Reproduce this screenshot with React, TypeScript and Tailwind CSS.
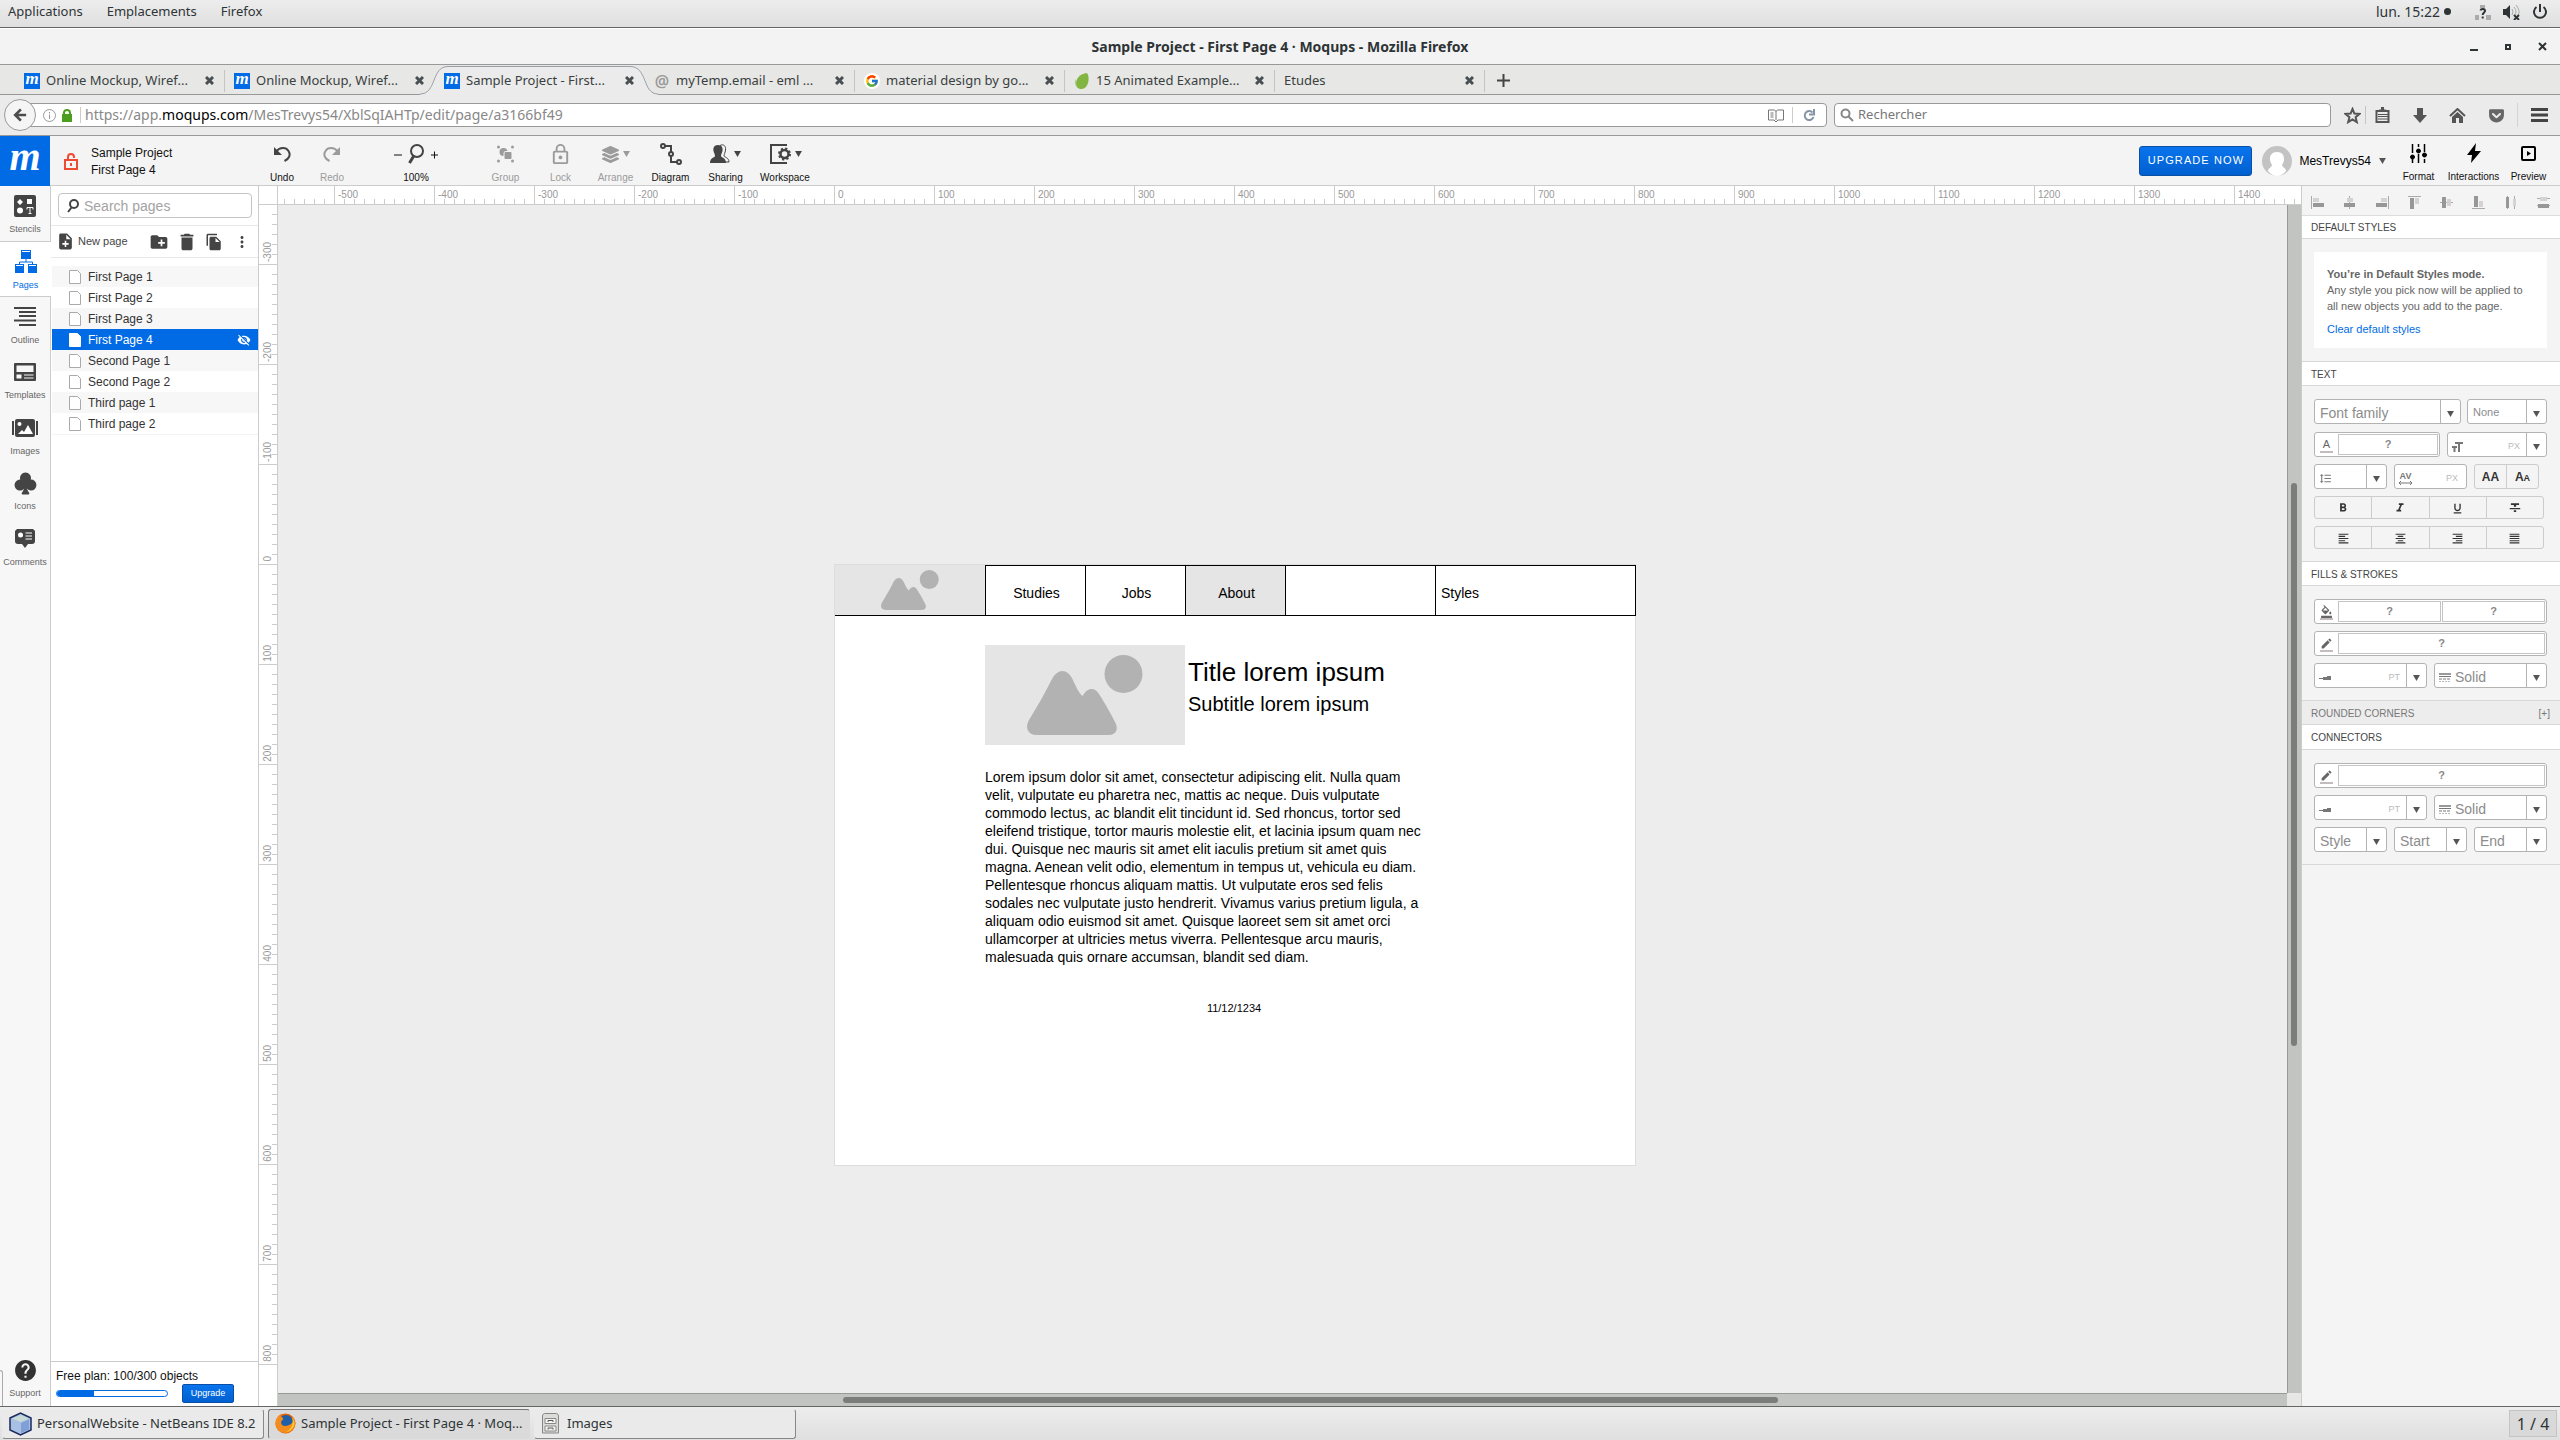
import type { ReactNode } from "react";
import {
  MdCreateNewFolder,
  MdDelete,
  MdEdit,
  MdFileCopy,
  MdFormatAlignCenter,
  MdFormatAlignJustify,
  MdFormatAlignLeft,
  MdFormatAlignRight,
  MdFormatBold,
  MdFormatColorFill,
  MdFormatItalic,
  MdFormatLineSpacing,
  MdFormatStrikethrough,
  MdFormatUnderlined,
  MdHelp,
  MdLockOutline,
  MdMoreVert,
  MdNoteAdd,
  MdVisibilityOff,
} from "react-icons/md";
import { FaGetPocket, FaLayerGroup } from "react-icons/fa";
import { FcGoogle } from "react-icons/fc";
import { BsSuitClubFill } from "react-icons/bs";

const UI = "font-['Noto_Sans',sans-serif]";
const APP = "font-['Liberation_Sans',Arial,sans-serif]";

function Caret({ className = "" }: { className?: string }) {
  return (
    <svg className={className} width="8" height="7" viewBox="0 0 8 7" aria-hidden="true">
      <path d="M0 0h8L4 7z" fill="currentColor" />
    </svg>
  );
}

/* ---------- desktop bar ---------- */

function DesktopBar() {
  return (
    <header
      className={`flex h-7 shrink-0 items-center border-b border-[#666] bg-linear-to-b from-[#ededed] to-[#dfdfdf] px-2 pb-1 text-[13px] text-[#2e3436] ${UI}`}
    >
      <nav className="flex gap-6">
        <button>Applications</button>
        <button>Emplacements</button>
        <button>Firefox</button>
      </nav>
      <div className="ml-auto flex items-center pr-1">
        <button className="flex items-center gap-1 text-sm">
          lun. 15:22
          <span className="size-[7px] rounded-full bg-[#2e3436]" />
        </button>
        <button aria-label="Network" className="ml-6">
          <svg width="16" height="16" viewBox="0 0 16 16">
            <path d="M5 1h5v3H5zM0 11h4v5H0zM11 11h5v5h-5z" fill="#a9abac" />
            <path d="M5.5 6.5C6 4.500 10 4.500 10 7c0 1.500-2.300 1.500-2.300 4M7.700 12.500v2" stroke="#2e3436" strokeWidth="2" fill="none" />
          </svg>
        </button>
        <button aria-label="Sound muted" className="ml-3">
          <svg width="17" height="16" viewBox="0 0 17 16">
            <path d="M0 5h3l4-4v14l-4-4H0z" fill="#2e3436" />
            <path d="M9 5q2 3 0 6M11 3q4 5 0 9M13 1q5 6 2 10" stroke="#a9abac" fill="none" />
            <path d="M11 11l5 5M16 11l-5 5" stroke="#2e3436" strokeWidth="2" />
          </svg>
        </button>
        <button aria-label="Power" className="ml-3">
          <svg width="16" height="16" viewBox="0 0 16 16" fill="none" stroke="#2e3436" strokeWidth="2">
            <path d="M8 0v8M4.500 3a6 6 0 1 0 7 0" />
          </svg>
        </button>
      </div>
    </header>
  );
}

function TitleBar() {
  return (
    <div
      className={`flex h-[37px] shrink-0 items-center border-t border-b border-t-white border-b-[#999] bg-[#f3f3f3] text-[#2e3436] ${UI}`}
    >
      <div className="w-[100px]" />
      <h1 className="flex-1 text-center text-sm font-bold">Sample Project - First Page 4 · Moqups - Mozilla Firefox</h1>
      <div className="flex w-[100px] items-center justify-end gap-[26px] pr-[13px]">
        <button aria-label="Minimise">
          <svg width="8" height="8" viewBox="0 0 8 8"><path d="M0 7h8" stroke="#2e3436" strokeWidth="2" /></svg>
        </button>
        <button aria-label="Maximise">
          <svg width="8" height="8" viewBox="0 0 8 8"><path d="M2 2h4v4H2z" stroke="#2e3436" strokeWidth="2" fill="none" /></svg>
        </button>
        <button aria-label="Close window">
          <svg width="9" height="9" viewBox="0 0 9 9"><path d="M1 1l7 7M8 1L1 8" stroke="#2e3436" strokeWidth="2" /></svg>
        </button>
      </div>
    </div>
  );
}

/* ---------- browser chrome ---------- */

function MFavicon() {
  return (
    <span className="flex size-4 shrink-0 items-center justify-center bg-[#006be5] pb-1 font-['Liberation_Serif',serif] text-[17px] leading-4 font-bold text-white italic">
      m
    </span>
  );
}

const tabs: { title: string; icon: ReactNode; active?: boolean }[] = [
  { title: "Online Mockup, Wiref...", icon: <MFavicon /> },
  { title: "Online Mockup, Wiref...", icon: <MFavicon /> },
  { title: "Sample Project - First...", icon: <MFavicon />, active: true },
  { title: "myTemp.email - eml ...", icon: <span className="w-4 text-center text-base leading-4 font-semibold text-[#999]">@</span> },
  {
    title: "material design by go...",
    icon: (
      <span className="flex size-4 items-center justify-center rounded-full bg-white">
        <FcGoogle size={14} />
      </span>
    ),
  },
  {
    title: "15 Animated Example...",
    icon: (
      <svg width="16" height="16" viewBox="0 0 16 16">
        <path d="M13 0C6 1 2 5 2 11c0 3 2 5 6 5 7-1 8-12 5-16z" fill="#82b541" />
        <path d="M2 6C0 9 1 13 4 15 2 12 2 9 2 6z" fill="#a9cc7c" />
      </svg>
    ),
  },
  { title: "Etudes", icon: null },
];

function TabBar() {
  return (
    <div className={`flex h-[30px] shrink-0 border-b border-[#999] bg-[#e7e7e5] pl-[15px] text-[13px] text-[#3a3f41] ${UI}`}>
      {tabs.map((tab, i) => (
        <div key={i} className="relative flex w-[210px] items-center gap-[6px] pt-[2px] pr-[11px] pl-[9px]">
          {tab.active ? (
            <svg className="absolute top-0 -left-[15px] h-[30px] w-[240px]" viewBox="0 0 240 30" fill="none" aria-hidden="true">
              <path d="M0 30V29C17 29 11 1.500 28 1.500H210C228 1.500 222 29 238 29V30z" fill="#ebebeb" />
              <path d="M0 29C17 29 11 1.500 28 1.500H210C228 1.500 222 29 238 29" stroke="#9aa0a8" />
            </svg>
          ) : (
            i !== 1 && <span className="absolute top-[5px] right-0 h-[22px] w-px bg-[#c4c4c4]" />
          )}
          {tab.icon && <span className="relative flex shrink-0">{tab.icon}</span>}
          <span className="relative flex-1 whitespace-nowrap">{tab.title}</span>
          <button aria-label="Close tab" className="relative">
            <svg width="9" height="9" viewBox="0 0 9 9"><path d="M1 1l7 7M8 1L1 8" stroke="#4a4f52" strokeWidth="3" /></svg>
          </button>
        </div>
      ))}
      <button aria-label="New tab" className="ml-3 pt-[2px]">
        <svg width="13" height="13" viewBox="0 0 13 13"><path d="M6.500 0v13M0 6.500h13" stroke="#444" strokeWidth="2" /></svg>
      </button>
    </div>
  );
}

function NavBar() {
  return (
    <div className={`flex h-[41px] shrink-0 items-center border-b border-[#999] bg-[#ebebeb] pr-3 pl-1 text-[13px] ${UI}`}>
      <button
        aria-label="Back"
        className="z-10 flex size-8 shrink-0 items-center justify-center rounded-full border border-[#999] bg-[#f5f5f5]"
      >
        <svg width="14" height="14" viewBox="0 0 16 16" fill="none" stroke="#4c4c4c" strokeWidth="3">
          <path d="M15 8H3M9 1.500L2.500 8 9 14.500" />
        </svg>
      </button>
      <div className="-ml-3 flex h-6 flex-1 items-center rounded-sm border border-[#999] bg-white pl-[18px]">
        <svg width="13" height="13" viewBox="0 0 13 13" fill="none" stroke="#999">
          <circle cx="6.500" cy="6.500" r="6" />
          <path d="M6.500 5.500V10M6.500 3v1.500" />
        </svg>
        <svg className="ml-[6px]" width="10" height="13" viewBox="0 0 10 13">
          <path d="M0 5h10v8H0z" fill="#4c9e1f" />
          <path d="M2 6V4a3 3 0 0 1 6 0v2" stroke="#4c9e1f" strokeWidth="2" fill="none" />
        </svg>
        <span className="ml-2 h-4 w-px bg-[#ccc]" />
        <a href="#page" className="ml-1 flex-1 text-sm leading-5 text-[#888]">
          https://app.<span className="text-black">moqups.com</span>/MesTrevys54/XblSqIAHTp/edit/page/a3166bf49
        </a>
        <button aria-label="Reader view">
          <svg width="16" height="13" viewBox="0 0 16 13" fill="none" stroke="#777">
            <path d="M.5 1h6L8 2.500 9.500 1h6v10H10l-2 2-2-2H.5zM8 2v9M2.500 4h3M2.500 6h3M2.500 8h3" />
          </svg>
        </button>
        <span className="ml-2 h-4 w-px bg-[#ccc]" />
        <button aria-label="Reload" className="mr-[11px] ml-[10px]">
          <svg width="12" height="13" viewBox="0 0 12 13" fill="none" stroke="#8494a4" strokeWidth="2">
            <path d="M9.500 3.500A4.500 4.500 0 1 0 10.500 8M11 0v5.500H6" />
          </svg>
        </button>
      </div>
      <label className="ml-[7px] flex h-6 w-[497px] items-center rounded-sm border border-[#999] bg-white pl-[5px]">
        <svg width="14" height="14" viewBox="0 0 14 14" fill="none" stroke="#888" strokeWidth="2">
          <circle cx="5.500" cy="5.500" r="4" />
          <path d="M8.500 8.500L13 13" />
        </svg>
        <input aria-label="Rechercher" placeholder="Rechercher" className="ml-1 flex-1 outline-none placeholder:text-[#777]" />
      </label>
      <button aria-label="Bookmark" className="ml-[13px]">
        <svg width="17" height="17" viewBox="0 0 17 17" fill="none" stroke="#555" strokeWidth="2">
          <path d="M8.500 2l1.900 4.600 5 .4-3.800 3.200 1.200 4.900-4.300-2.700-4.300 2.700 1.200-4.900L1.600 7l5-.4z" />
        </svg>
      </button>
      <span className="ml-1 h-[18px] w-px bg-[#c4c4c4]" />
      <button aria-label="Library" className="ml-[9px]">
        <svg width="15" height="16" viewBox="0 0 15 16">
          <path d="M1.500 4h12v11h-12z" fill="none" stroke="#555" strokeWidth="2" />
          <path d="M4 2.500h2V0h3v2.500h2V5H4z" fill="#555" />
          <path d="M3 7.500h10M3 9.500h10M3 12h10" stroke="#555" />
        </svg>
      </button>
      <button aria-label="Downloads" className="ml-[23px]">
        <svg width="14" height="15" viewBox="0 0 14 15"><path d="M4 0h6v7h4l-7 8-7-8h4z" fill="#555" /></svg>
      </button>
      <button aria-label="Home" className="ml-[22px]">
        <svg width="17" height="15" viewBox="0 0 17 15">
          <path d="M1 8l7.500-7L16 8" fill="none" stroke="#555" strokeWidth="2" />
          <path d="M3 9l5.500-5L14 9v6h-4v-5H7v5H3z" fill="#555" />
        </svg>
      </button>
      <button aria-label="Pocket" className="ml-[22px] text-[#666]">
        <FaGetPocket size={17} />
      </button>
      <span className="ml-[12px] h-6 w-px bg-[#d4d4d4]" />
      <button aria-label="Menu" className="ml-[13px]">
        <svg width="17" height="14" viewBox="0 0 17 14"><path d="M0 1.500h17M0 7h17M0 12.500h17" stroke="#444" strokeWidth="3" /></svg>
      </button>
    </div>
  );
}

/* ---------- app header ---------- */

function ToolButton({
  label,
  icon,
  caret,
  disabled,
  className = "w-[55px]",
}: {
  label: string;
  icon: ReactNode;
  caret?: boolean;
  disabled?: boolean;
  className?: string;
}) {
  return (
    <button className={`flex flex-col items-center text-[10px] ${disabled ? "text-[#9b9b9b]" : "text-[#111]"} ${className}`}>
      <span className={`flex h-6 items-center gap-1 ${disabled ? "" : "text-[#444]"}`}>
        {icon}
        {caret && <Caret className="h-[6px] w-[7px]" />}
      </span>
      <span className="mt-1 leading-4">{label}</span>
    </button>
  );
}

const undoIcon = (
  <svg width="18" height="20" viewBox="0 0 18 20">
    <path d="M3 7.500C7 3 13 3 15.500 7S16 15 11.500 17" fill="none" stroke="currentColor" strokeWidth="2" />
    <path d="M1 3v8h8z" fill="currentColor" />
  </svg>
);
const groupIcon = (
  <svg width="17" height="18" viewBox="0 0 17 18" fill="currentColor">
    <circle cx="1.500" cy="2" r="1.500" />
    <circle cx="15.500" cy="2" r="1.500" />
    <circle cx="1.500" cy="16" r="1.500" />
    <circle cx="15.500" cy="16" r="1.500" />
    <path d="M6.500 3a4 4 0 0 1 4 3H9Q6.500 6 6.500 9v2A4 4 0 0 1 6.500 3z" />
    <rect x="7.500" y="7" width="7" height="7" rx="1" />
  </svg>
);
const diagramIcon = (
  <svg width="22" height="22" viewBox="0 0 22 22" fill="none" stroke="currentColor" strokeWidth="2">
    <circle cx="3" cy="3" r="2" />
    <circle cx="11" cy="11" r="2" />
    <circle cx="19" cy="19" r="2" />
    <path d="M5 3h6v6M11 13v6h6" />
  </svg>
);
const sharingIcon = (
  <svg width="20" height="20" viewBox="0 0 20 20">
    <path d="M10 1.500c4-2 6 1 5.500 4.500-.3 3-1.500 4-1.500 6 0 1 5 1.500 5 6h-4" fill="none" stroke="currentColor" />
    <path d="M8 1c4 0 5 3 4.500 6-.3 2-1.500 3-1.500 5 0 1.500 5 1.500 5 7H0c0-5.500 5-5.500 5-7 0-2-1.200-3-1.500-5C3 4 4 1 8 1z" fill="currentColor" />
  </svg>
);
const workspaceIcon = (
  <svg width="22" height="22" viewBox="0 0 22 22" fill="none" stroke="currentColor">
    <path d="M17 3V2H2v18h15v-1" strokeWidth="2" />
    <circle cx="15.500" cy="11" r="4" strokeWidth="2.500" />
    <circle cx="15.500" cy="11" r="5.500" strokeWidth="2" strokeDasharray="2.160 2.160" />
  </svg>
);

function AppHeader() {
  return (
    <div className={`flex h-[50px] shrink-0 border-b border-[#ccc] bg-[#f4f4f4] ${APP}`}>
      <a
        href="#home"
        aria-label="Moqups"
        className="-mb-px flex w-[50px] items-center justify-center bg-[#006be5] pb-2 font-['Liberation_Serif',serif] text-[40px] leading-none font-bold text-white italic"
      >
        m
      </a>
      <div className="flex w-[206px] items-center pt-[2px] pl-[14px] text-xs leading-[17px] text-[#111]">
        <svg width="14" height="19" viewBox="0 0 14 19" fill="none" stroke="#ef4a34" strokeWidth="2">
          <rect x="1" y="8" width="12" height="9" />
          <path d="M4 8V5a3 3 0 0 1 6 0v1" />
          <path d="M6 12.500h2" strokeWidth="3" />
        </svg>
        <div className="ml-[13px]">
          <p>Sample Project</p>
          <p>First Page 4</p>
        </div>
      </div>
      <div className="flex flex-1 items-start pt-[6px] pl-px">
        <ToolButton label="Undo" icon={undoIcon} className="w-[50px]" />
        <ToolButton label="Redo" icon={<span className="-scale-x-100">{undoIcon}</span>} disabled className="w-[50px]" />
        <ToolButton
          label="100%"
          className="mr-8 ml-[29px] w-[60px]"
          icon={
            <svg width="44" height="20" viewBox="0 0 44 20" fill="none" stroke="currentColor">
              <path d="M0 11h8M37 11h8M40.500 7.500v7" stroke="#111" />
              <circle cx="23" cy="7" r="6" strokeWidth="2" />
              <path d="M20 11.500L15.500 19" strokeWidth="3" />
            </svg>
          }
        />
        <ToolButton label="Group" icon={groupIcon} disabled />
        <ToolButton label="Lock" icon={<MdLockOutline size={23} />} disabled />
        <ToolButton label="Arrange" icon={<FaLayerGroup size={17} />} caret disabled />
        <ToolButton label="Diagram" icon={diagramIcon} />
        <ToolButton label="Sharing" icon={sharingIcon} caret />
        <ToolButton label="Workspace" icon={workspaceIcon} caret className="w-16" />
      </div>
      <div className="flex items-center">
        <button className="h-[30px] w-[113px] rounded-[3px] border border-[#0a4fa3] bg-linear-to-b from-[#0a74ee] to-[#0060d0] text-[11px] tracking-widest text-white">
          UPGRADE NOW
        </button>
        <button className="ml-[10px] flex items-center text-xs text-black">
          <svg width="30" height="30" viewBox="0 0 30 30">
            <circle cx="15" cy="15" r="15" fill="#c3c3c3" />
            <path d="M15 6c5 0 7 3 7 7 0 3-1 4-2 6 0 2 4 3 4 6q-4 5-9 5t-9-5c0-3 4-4 4-6-1-2-2-3-2-6 0-4 2-7 7-7z" fill="#fff" />
          </svg>
          <span className="ml-[7px]">MesTrevys54</span>
          <Caret className="ml-2 h-[6px] w-[7px] text-[#555]" />
        </button>
      </div>
      <div className="flex items-start pt-[5px] pr-1 pl-[5px]">
        <ToolButton
          label="Format"
          icon={
            <svg width="17" height="19" viewBox="0 0 17 19" fill="#000" stroke="#000">
              <path d="M2.500 0v9M2.500 15v4M8.500 0v3M8.500 10v9M14.500 0v8M14.500 15v4" strokeWidth="1.500" />
              <circle cx="2.500" cy="13" r="2" />
              <circle cx="8.500" cy="7" r="2" />
              <circle cx="14.500" cy="11" r="2" />
            </svg>
          }
        />
        <ToolButton label="Interactions" icon={<svg width="14" height="20" viewBox="0 0 14 20"><path d="M9 0L0 12h5l-1 8L14 8H8z" fill="#000" /></svg>} />
        <ToolButton
          label="Preview"
          icon={
            <svg width="15" height="15" viewBox="0 0 15 15" fill="none" stroke="#000">
              <rect x="1" y="1" width="13" height="13" rx="1" strokeWidth="2" />
              <path d="M6 5v5l4-2.500z" fill="#000" stroke="none" />
            </svg>
          }
        />
      </div>
    </div>
  );
}

/* ---------- left rail ---------- */

const railItems: { label: string; icon: ReactNode }[] = [
  {
    label: "Stencils",
    icon: (
      <svg width="22" height="22" viewBox="0 0 22 22">
        <rect width="22" height="22" rx="2" fill="currentColor" />
        <path d="M6 4l3 3-3 3-3-3zM13 4h5v5h-5z" fill="#fff" />
        <circle cx="6" cy="15.500" r="3" fill="#fff" />
        <path d="M13 14.500v-2h6v2M16 12.500V18M14.500 18.500h3" fill="none" stroke="#fff" />
      </svg>
    ),
  },
  {
    label: "Pages",
    icon: (
      <svg width="22" height="24" viewBox="0 0 22 24" fill="currentColor">
        <path d="M6 0h10v9H6zM0 14h9v9H0zM13 14h9v9h-9z" />
        <path d="M7 1.500h8M1 15.500h7M14 15.500h7" stroke="#fff" />
        <path d="M4.500 14v-2h13v2M11 9v3" fill="none" stroke="currentColor" />
      </svg>
    ),
  },
  {
    label: "Outline",
    icon: (
      <svg width="22" height="19" viewBox="0 0 22 19" stroke="currentColor" strokeWidth="2">
        <path d="M0 1h22M5 5h17M5 9h17M0 13.500h22M5 18h17" />
      </svg>
    ),
  },
  {
    label: "Templates",
    icon: (
      <svg width="22" height="18" viewBox="0 0 22 18">
        <rect width="22" height="18" rx="1" fill="currentColor" />
        <path d="M2.500 2.500h17V9h-17zM2.500 11.500h5v4h-5z" fill="#f7f7f7" />
        <path d="M10 12h9.500M10 15h9.500" stroke="#f7f7f7" />
      </svg>
    ),
  },
  {
    label: "Images",
    icon: (
      <svg width="26" height="18" viewBox="0 0 26 18">
        <rect x="3" width="20" height="18" rx="2" fill="currentColor" />
        <path d="M1 2v14M25 2v14" stroke="currentColor" strokeWidth="2" />
        <circle cx="7.500" cy="5" r="2" fill="#fff" />
        <path d="M6 15l4-4 2 2 4-7 5 9z" fill="#fff" />
      </svg>
    ),
  },
  { label: "Icons", icon: <BsSuitClubFill size={25} /> },
  {
    label: "Comments",
    icon: (
      <svg width="20" height="19" viewBox="0 0 20 19">
        <path d="M2 0h16l2 2v10q0 3-3 3h-4l-3 4-3-4H3q-3 0-3-3V2z" fill="currentColor" />
        <circle cx="5.500" cy="6" r="2.500" fill="#fff" />
        <path d="M10.500 4H17M10.500 7H17M10.500 10H17" stroke="#fff" />
      </svg>
    ),
  },
];

function Rail() {
  return (
    <nav className="relative flex w-[51px] shrink-0 flex-col bg-[#f7f7f7] text-[9px] text-[#666]">
      <div className="grid h-[388px] grid-rows-7">
        {railItems.map((item) => {
          const active = item.label === "Pages";
          return (
            <button
              key={item.label}
              className={`flex flex-col items-center ${
                active ? "border-y border-[#ccc] bg-white text-[#006be5]" : "border-r border-[#ccc]"
              }`}
            >
              <span className={`mt-[7px] flex h-[26px] items-center ${active ? "" : "text-[#444]"}`}>{item.icon}</span>
              <span className="mt-1 leading-3">{item.label}</span>
            </button>
          );
        })}
      </div>
      <div className="flex flex-1 flex-col items-center justify-end border-r border-[#ccc] pb-[7px]">
        <button className="flex flex-col items-center">
          <MdHelp size={25} className="text-[#333]" />
          <span className="mt-1 leading-3">Support</span>
        </button>
      </div>
      <span className="absolute bottom-0 left-0 h-9 w-[3px] rounded-tr-sm border-t border-r border-[#aaa]" />
    </nav>
  );
}

/* ---------- pages panel ---------- */

const pages = [
  "First Page 1",
  "First Page 2",
  "First Page 3",
  "First Page 4",
  "Second Page 1",
  "Second Page 2",
  "Third page 1",
  "Third page 2",
];

function PageIcon({ filled }: { filled: boolean }) {
  return (
    <svg width="12" height="14" viewBox="0 0 12 14">
      <path d="M.5.5h8l3 3v10H.5z" fill="#fff" stroke={filled ? "#fff" : "#aaa"} />
    </svg>
  );
}

function PagesPanel() {
  return (
    <aside className="flex w-[208px] shrink-0 flex-col border-r border-[#ccc] bg-white text-[#333]">
      <div className="border-b border-[#e8e8e8] p-[7px] pr-[6px]">
        <label className="flex h-[25px] items-center rounded-sm border border-[#c4c4c4] pl-2">
          <svg width="12" height="14" viewBox="0 0 12 14" fill="none" stroke="#444">
            <circle cx="7" cy="5" r="4" strokeWidth="2" />
            <path d="M4.500 8.500L1 13" strokeWidth="2" />
          </svg>
          <input aria-label="Search pages" placeholder="Search pages" className="ml-[5px] w-[150px] text-sm outline-none placeholder:text-[#a3a3a3]" />
        </label>
      </div>
      <div className="flex h-8 items-center border-b border-[#e8e8e8] pl-[5px] text-[#444]">
        <button className="flex items-center gap-[3px] text-[11px]">
          <MdNoteAdd size={19} />
          New page
        </button>
        <button aria-label="New folder" className="ml-[21px]"><MdCreateNewFolder size={20} /></button>
        <button aria-label="Delete page" className="ml-[7px]"><MdDelete size={22} /></button>
        <button aria-label="Duplicate page" className="ml-[7px]"><MdFileCopy size={18} /></button>
        <button aria-label="More" className="ml-[10px]"><MdMoreVert size={18} /></button>
      </div>
      <ul className="mt-2 ml-px flex-1 text-xs">
        {pages.map((page, i) => {
          const selected = i === 3;
          return (
            <li
              key={page}
              className={`flex h-[21px] items-center pt-px pr-[7px] pl-[17px] ${
                selected ? "bg-[#006be5] text-white" : i % 2 === 0 ? "bg-[#f7f7f7]" : "bg-white"
              }`}
            >
              <button className="flex flex-1 items-center gap-[7px]">
                <PageIcon filled={selected} />
                {page}
              </button>
              {selected && <MdVisibilityOff size={14} />}
            </li>
          );
        })}
        <li className="h-px bg-[#f4f4f4]" />
      </ul>
      <div className="h-[45px] border-t border-[#ccc] pt-[6px] pl-[5px]">
        <p className="text-xs leading-4 text-[#111]">Free plan: 100/300 objects</p>
        <div className="flex items-center">
          <div className="h-[7px] w-[112px] overflow-hidden rounded-full border border-[#006be5]">
            <div className="h-full w-1/3 bg-[#006be5]" />
          </div>
          <button className="ml-[14px] h-[19px] w-[52px] rounded-xs border border-[#0a4fa3] bg-linear-to-b from-[#0a74ee] to-[#0060d0] text-[9px] text-white">
            Upgrade
          </button>
        </div>
      </div>
    </aside>
  );
}

/* ---------- rulers and canvas ---------- */

const hMarks = Array.from({ length: 20 }, (_, i) => -500 + i * 100);
const vMarks = Array.from({ length: 12 }, (_, i) => -300 + i * 100);

function HRuler() {
  return (
    <div className="flex h-[19px] flex-1 overflow-hidden border-b border-[#ccc] bg-white text-[10px] text-[#999]">
      <div className="w-[56px] shrink-0 bg-[repeating-linear-gradient(to_left,transparent_0_9px,#ccc_9px_10px)] bg-[length:100%_5px] bg-bottom bg-no-repeat" />
      {hMarks.map((n) => (
        <div
          key={n}
          className="h-full w-[100px] shrink-0 border-l border-[#ccc] bg-[repeating-linear-gradient(to_right,transparent_0_9px,#ccc_9px_10px)] bg-[length:100%_5px] bg-bottom bg-no-repeat pl-[3px] leading-[18px]"
        >
          {n}
        </div>
      ))}
    </div>
  );
}

function VRuler() {
  return (
    <div className="flex h-full w-[19px] shrink-0 flex-col overflow-hidden border-r border-[#ccc] bg-white text-[10px] text-[#999]">
      {vMarks.map((n, i) => (
        <div
          key={n}
          className={`flex w-full shrink-0 flex-col items-start justify-end border-b border-[#ccc] bg-[repeating-linear-gradient(to_top,transparent_0_9px,#ccc_9px_10px)] bg-[length:5px_100%] bg-right bg-no-repeat pb-[2px] ${
            i === 0 ? "h-[60px]" : "h-[100px]"
          }`}
        >
          <span className="rotate-180 leading-[17px] [writing-mode:vertical-rl]">{n}</span>
        </div>
      ))}
    </div>
  );
}

function Picture({ className }: { className: string }) {
  return (
    <svg className={`bg-[#e5e5e5] ${className}`} viewBox="0 0 200 100" fill="#b2b2b2" role="img" aria-label="Placeholder picture">
      <circle cx="138.500" cy="29" r="19" />
      <path d="M52 90C42 90 40 82 44 75C52 62 60 48 66 36C72 23 82 23 87.500 34C91 42 94 48 97.500 51C102 43 109 41 114 49C121 60 126 69 130 77C134 84 131 90 124 90Z" />
    </svg>
  );
}

const paragraph = [
  "Lorem ipsum dolor sit amet, consectetur adipiscing elit. Nulla quam",
  "velit, vulputate eu pharetra nec, mattis ac neque. Duis vulputate",
  "commodo lectus, ac blandit elit tincidunt id. Sed rhoncus, tortor sed",
  "eleifend tristique, tortor mauris molestie elit, et lacinia ipsum quam nec",
  "dui. Quisque nec mauris sit amet elit iaculis pretium sit amet quis",
  "magna. Aenean velit odio, elementum in tempus ut, vehicula eu diam.",
  "Pellentesque rhoncus aliquam mattis. Ut vulputate eros sed felis",
  "sodales nec vulputate justo hendrerit. Vivamus varius pretium ligula, a",
  "aliquam odio euismod sit amet. Quisque laoreet sem sit amet orci",
  "ullamcorper at ultricies metus viverra. Pellentesque arcu mauris,",
  "malesuada quis ornare accumsan, blandit sed diam.",
];

function Artboard() {
  return (
    <article className="absolute top-[359px] left-[556px] h-[602px] w-[802px] border border-[#ddd] bg-white text-black">
      <nav className="-mr-px grid h-[51px] grid-cols-[150px_100px_100px_100px_150px_201px] border-b border-black text-sm">
        <Picture className="h-[50px] w-[150px]" />
        <a href="#studies" className="flex items-center justify-center border-t border-l border-black pt-1 pl-[2px]">Studies</a>
        <a href="#jobs" className="flex items-center justify-center border-t border-l border-black pt-1 pl-[2px]">Jobs</a>
        <a href="#about" className="flex items-center justify-center border-t border-l border-black bg-[#e5e5e5] pt-1 pl-[2px]">About</a>
        <span className="border-t border-l border-black" />
        <a href="#styles" className="flex items-center border-x border-t border-black pt-1 pl-[5px]">Styles</a>
      </nav>
      <div className="pt-[29px] pl-[150px]">
        <div className="flex">
          <Picture className="h-[100px] w-[200px]" />
          <div className="pt-[11px] pl-[3px]">
            <h2 className="text-[26px] leading-8">Title lorem ipsum</h2>
            <h3 className="text-xl leading-8">Subtitle lorem ipsum</h3>
          </div>
        </div>
        <p className="mt-[23px] text-sm leading-[18px] whitespace-nowrap">
          {paragraph.map((line) => (
            <span key={line} className="block">{line}</span>
          ))}
        </p>
        <p className="mt-[34px] w-[498px] text-center text-[11px] leading-4">11/12/1234</p>
      </div>
    </article>
  );
}

function Canvas() {
  return (
    <main className="flex min-w-0 flex-1 flex-col">
      <div className="flex h-[19px] shrink-0">
        <div className="w-[19px] border-r border-b border-[#ccc] bg-white" />
        <HRuler />
      </div>
      <div className="flex min-h-0 flex-1">
        <VRuler />
        <div className="grid min-w-0 flex-1 grid-cols-[1fr_14px] grid-rows-[1fr_13px]">
          <div className="relative overflow-hidden bg-[#ededed]">
            <Artboard />
          </div>
          <div className="border-l border-[#999] bg-[#c2c4c2] pt-[278px] pl-[3px]">
            <div className="h-[563px] w-[6px] rounded-full bg-[#7a7d7c]" />
          </div>
          <div className="border-t border-[#999] bg-[#c2c4c2] pt-[3px] pl-[565px]">
            <div className="h-[6px] w-[935px] rounded-full bg-[#7a7d7c]" />
          </div>
          <div className="bg-[#e7e7e5]" />
        </div>
      </div>
    </main>
  );
}

/* ---------- format panel ---------- */

const alignments: { label: string; dark: string; light: string; line: string }[] = [
  { label: "Align left", line: "M.5 0v13", dark: "M2 7h11v4H2z", light: "M2 2h6v4H2z" },
  { label: "Align centre", line: "M6.500 0v13", dark: "M1 7h11v4H1z", light: "M4 2h6v4H4z" },
  { label: "Align right", line: "M12.500 0v13", dark: "M0 7h11v4H0z", light: "M5 2h6v4H5z" },
  { label: "Align top", line: "M0 .5h13", dark: "M2 2h4v11H2z", light: "M7 2h4v6H7z" },
  { label: "Align middle", line: "M0 6.500h13", dark: "M2 1h4v11H2z", light: "M7 3h4v7H7z" },
  { label: "Align bottom", line: "M0 12.500h13", dark: "M2 0h4v11H2z", light: "M7 5h4v6H7z" },
  { label: "Distribute horizontally", line: "M2.500 0v13M9.500 0v13", dark: "M1 1h3v11H1z", light: "M8 3h3v7H8z" },
  { label: "Distribute vertically", line: "M0 2.500h13M0 9.500h13", dark: "M1 8h11v4H1z", light: "M3 1h7v4H3z" },
];

function SectionTitle({ children, className = "h-[25px] border-y" }: { children: ReactNode; className?: string }) {
  return (
    <h2 className={`flex items-center border-[#d8d8d8] bg-white pt-px pr-[10px] pl-[9px] text-[10px] text-[#444] ${className}`}>
      {children}
    </h2>
  );
}

const field = "flex h-[25px] items-stretch overflow-hidden rounded-[3px] border border-[#b3b3b3] bg-white";

function DropField({
  label,
  value,
  icon,
  unit,
  width = "w-[73px]",
  text = "text-sm",
}: {
  label: string;
  value: string;
  icon?: ReactNode;
  unit?: string;
  width?: string;
  text?: string;
}) {
  return (
    <label className={`${field} ${width}`}>
      {icon && <span className="flex shrink-0 items-center pt-1 pl-1 text-[#777]">{icon}</span>}
      <select
        aria-label={label}
        className={`min-w-0 flex-1 appearance-none bg-transparent pt-[2px] text-[#8c8c8c] outline-none ${icon ? "pl-1" : "pl-[5px]"} ${text}`}
      >
        <option>{value}</option>
      </select>
      {unit && <span className="self-center pt-1 pr-[6px] text-[9px] text-[#bbb]">{unit}</span>}
      <span className="flex w-5 shrink-0 items-center justify-center border-l border-[#b3b3b3] pt-[5px] text-[#555]">
        <Caret className="h-[6px] w-[7px]" />
      </span>
    </label>
  );
}

function ColorField({ label, icon, count = 1, width = "w-full" }: { label: string; icon: ReactNode; count?: number; width?: string }) {
  return (
    <div className={`${field} ${width} gap-px p-px`}>
      <span className="flex w-[21px] shrink-0 flex-col items-center justify-end text-[#666]">
        {icon}
        <span className="mb-[2px] h-[2px] w-[13px] bg-[#c4bcbc]" />
      </span>
      {Array.from({ length: count }, (_, i) => (
        <button key={i} aria-label={`${label} ${i + 1}`} className="flex-1 border border-[#c4c4c4] text-[11px] leading-none font-bold text-[#888]">
          ?
        </button>
      ))}
    </div>
  );
}

function ButtonGroup({ items, className }: { items: { label: string; icon: ReactNode }[]; className: string }) {
  return (
    <div className={`flex divide-x divide-[#ccc] rounded-[3px] border border-[#ccc] text-[#333] ${className}`}>
      {items.map((item) => (
        <button key={item.label} aria-label={item.label} className="flex flex-1 items-center justify-center pt-px">
          {item.icon}
        </button>
      ))}
    </div>
  );
}

const widthIcon = (
  <svg width="12" height="6" viewBox="0 0 12 6" fill="currentColor">
    <path d="M0 3h4v1H0zM4 2h4v3H4zM8 1h4v4H8z" />
  </svg>
);
const dashIcon = (
  <svg width="12" height="9" viewBox="0 0 12 9" stroke="currentColor">
    <path d="M0 1h12" strokeWidth="1.500" />
    <path d="M0 3.500h12" />
    <path d="M0 6h12" strokeDasharray="3 1" />
    <path d="M0 8.500h12" strokeDasharray="2 1" opacity=".5" />
  </svg>
);

function StrokeRow({ name }: { name: string }) {
  return (
    <div className="flex gap-[7px]">
      <DropField label={`${name} width`} value="" icon={widthIcon} unit="PT" width="w-[113px]" />
      <DropField label={`${name} pattern`} value="Solid" icon={dashIcon} width="w-[113px]" />
    </div>
  );
}

const body = "flex flex-col gap-[7px] pt-[13px] pr-[13px] pb-3 pl-3";

function FormatPanel() {
  return (
    <aside className="flex w-[259px] shrink-0 flex-col border-l border-[#ccc] bg-[#f4f4f4]">
      <div className="flex h-[30px] items-center justify-between border-b border-[#ddd] pt-4 pr-[10px] pb-3 pl-[9px]">
        {alignments.map((a) => (
          <button key={a.label} aria-label={a.label}>
            <svg width="13" height="13" viewBox="0 0 13 13">
              <path d={a.line} stroke="#aaa" />
              <path d={a.light} fill="#d6d2d2" />
              <path d={a.dark} fill="#979797" />
            </svg>
          </button>
        ))}
      </div>
      <SectionTitle className="h-[23px] border-b">DEFAULT STYLES</SectionTitle>
      <div className="py-[13px] pr-[13px] pl-3">
        <div className="h-24 bg-white pt-[14px] pl-[13px] text-[11px] leading-4 text-[#666]">
          <p className="font-bold">You’re in Default Styles mode.</p>
          <p>
            Any style you pick now will be applied to
            <br />
            all new objects you add to the page.
          </p>
          <a href="#clear" className="mt-[7px] block text-[#006be5]">Clear default styles</a>
        </div>
      </div>
      <SectionTitle>TEXT</SectionTitle>
      <div className={body}>
        <div className="flex h-[26px] gap-[6px]">
          <DropField label="Font family" value="Font family" width="w-[147px]" />
          <DropField label="Font weight" value="None" width="w-[80px]" text="text-[11px]" />
        </div>
        <div className="flex gap-[7px]">
          <ColorField label="Text colour" icon={<span className="text-[11px] leading-[14px]">A</span>} width="w-[126px]" />
          <DropField
            label="Font size"
            value=""
            unit="PX"
            width="w-[100px]"
            icon={
              <svg width="11" height="10" viewBox="0 0 11 10" fill="none" stroke="currentColor" strokeWidth="2">
                <path d="M3 1h8M7 1v9M0 5h5M2.500 5v5" />
              </svg>
            }
          />
        </div>
        <div className="flex gap-[7px]">
          <DropField label="Line height" value="" icon={<MdFormatLineSpacing size={13} />} />
          <label className={`${field} w-[73px] pr-2 pl-1`}>
            <span className="flex shrink-0 flex-col items-center self-center pt-1 text-[9px] leading-[9px] font-bold text-[#777]">
              AV
              <svg width="13" height="4" viewBox="0 0 13 4" fill="none" stroke="currentColor">
                <path d="M0 2h13M2 0L0 2l2 2M11 0l2 2-2 2" />
              </svg>
            </span>
            <input aria-label="Letter spacing" className="w-4 min-w-0 flex-1 outline-none" />
            <span className="self-center pt-1 text-[9px] text-[#bbb]">PX</span>
          </label>
          <ButtonGroup
            className="h-[25px] w-[65px]"
            items={[
              { label: "All caps", icon: <span className="text-xs font-bold">AA</span> },
              { label: "Small caps", icon: <span className="text-xs font-bold">A<span className="text-[9px]">A</span></span> },
            ]}
          />
        </div>
        <ButtonGroup
          className="h-[23px] w-[230px]"
          items={[
            { label: "Bold", icon: <MdFormatBold size={14} /> },
            { label: "Italic", icon: <MdFormatItalic size={14} /> },
            { label: "Underline", icon: <MdFormatUnderlined size={13} /> },
            { label: "Strikethrough", icon: <MdFormatStrikethrough size={14} /> },
          ]}
        />
        <ButtonGroup
          className="h-[23px] w-[230px]"
          items={[
            { label: "Text left", icon: <MdFormatAlignLeft size={13} /> },
            { label: "Text centre", icon: <MdFormatAlignCenter size={13} /> },
            { label: "Text right", icon: <MdFormatAlignRight size={13} /> },
            { label: "Justify", icon: <MdFormatAlignJustify size={13} /> },
          ]}
        />
      </div>
      <SectionTitle>FILLS &amp; STROKES</SectionTitle>
      <div className={body}>
        <ColorField label="Fill colour" icon={<MdFormatColorFill size={13} />} count={2} />
        <ColorField label="Stroke colour" icon={<MdEdit size={13} />} />
        <StrokeRow name="Stroke" />
      </div>
      <h2 className="flex h-6 items-center justify-between border-t border-[#d8d8d8] bg-[#ededed] pt-px pr-[10px] pl-[9px] text-[10px] text-[#777]">
        ROUNDED CORNERS <button aria-label="Expand rounded corners">[+]</button>
      </h2>
      <SectionTitle className="h-[26px] border-y">CONNECTORS</SectionTitle>
      <div className={`${body} border-b border-[#d8d8d8]`}>
        <ColorField label="Connector colour" icon={<MdEdit size={13} />} />
        <StrokeRow name="Connector" />
        <div className="flex gap-[7px]">
          <DropField label="Connector style" value="Style" />
          <DropField label="Connector start" value="Start" />
          <DropField label="Connector end" value="End" />
        </div>
      </div>
    </aside>
  );
}

/* ---------- task bar ---------- */

function TaskBar() {
  const task = "flex h-[30px] w-[262px] items-center rounded-[3px] border pl-[6px] whitespace-nowrap";
  const idle = "border-t-transparent border-l-transparent border-r-[#888] border-b-[#888] bg-[#eaeaea]";
  return (
    <footer
      className={`flex h-[34px] shrink-0 items-center gap-1 border-t border-[#666] bg-linear-to-b from-[#ededed] to-[#dfdfdf] pr-[3px] pl-[2px] text-[13px] text-[#2e3436] ${UI}`}
    >
      <button className={`${task} ${idle} gap-[5px]`}>
        <svg className="shrink-0" width="23" height="24" viewBox="0 0 23 24" stroke="#1b2a5c" strokeWidth="1.500">
          <path d="M1 6l10.500-5L22 6v12l-10.500 5L1 18z" fill="#a8c0e4" />
          <path d="M3 6.500L11.500 3 20 6.500 11.500 10z" fill="#c9dbd6" stroke="none" />
          <path d="M12 11l8-3.500v10L12 21z" fill="#7f9fd6" stroke="none" />
        </svg>
        PersonalWebsite - NetBeans IDE 8.2
      </button>
      <button className={`${task} gap-[5px] border-t-[#777] border-r-transparent border-b-transparent border-l-[#777] bg-[#dadada]`}>
        <svg className="shrink-0" width="21" height="21" viewBox="0 0 21 21">
          <circle cx="10.500" cy="10.500" r="10" fill="#e66000" />
          <circle cx="11" cy="9" r="7" fill="#1f5fa8" />
          <path d="M1 7c1-3 3-5 5-6-1 2 0 3 2 4 1 1-1 2-2 4 0 4 4 5 8 3 3-1 5-4 4-8 3 4 3 9 0 12-4 5-11 5-15 1C0 14 0 10 1 7z" fill="#f38b1d" />
          <path d="M17 4c3 4 3 9 0 12-2 2-4 3-6 3 6-3 8-9 6-15z" fill="#ffcb2d" />
        </svg>
        Sample Project - First Page 4 · Moq...
      </button>
      <button className={`${task} ${idle} gap-[7px]`}>
        <svg className="shrink-0" width="19" height="21" viewBox="0 0 19 21" fill="none" stroke="#888">
          <path d="M1.500 3q0-2 2-2.500h12q2 .5 2 2.500v17h-16z" fill="#dcdcd8" />
          <path d="M4 5.500h11v5H4zM4 13h11v5H4z" fill="#f4f4f0" />
          <path d="M7 9V7.500h5V9M7 16.500V15h5v1.500" stroke="#555" />
        </svg>
        Images
      </button>
      <button className="ml-auto h-[27px] w-12 border border-[#c4c4c4] bg-[#d9d9d9] text-base leading-6">1 / 4</button>
    </footer>
  );
}

export default function App() {
  return (
    <div className="flex h-screen flex-col overflow-hidden bg-[#f4f4f4]">
      <DesktopBar />
      <TitleBar />
      <TabBar />
      <NavBar />
      <AppHeader />
      <div className={`flex min-h-0 flex-1 ${APP}`}>
        <Rail />
        <PagesPanel />
        <Canvas />
        <FormatPanel />
      </div>
      <TaskBar />
    </div>
  );
}
